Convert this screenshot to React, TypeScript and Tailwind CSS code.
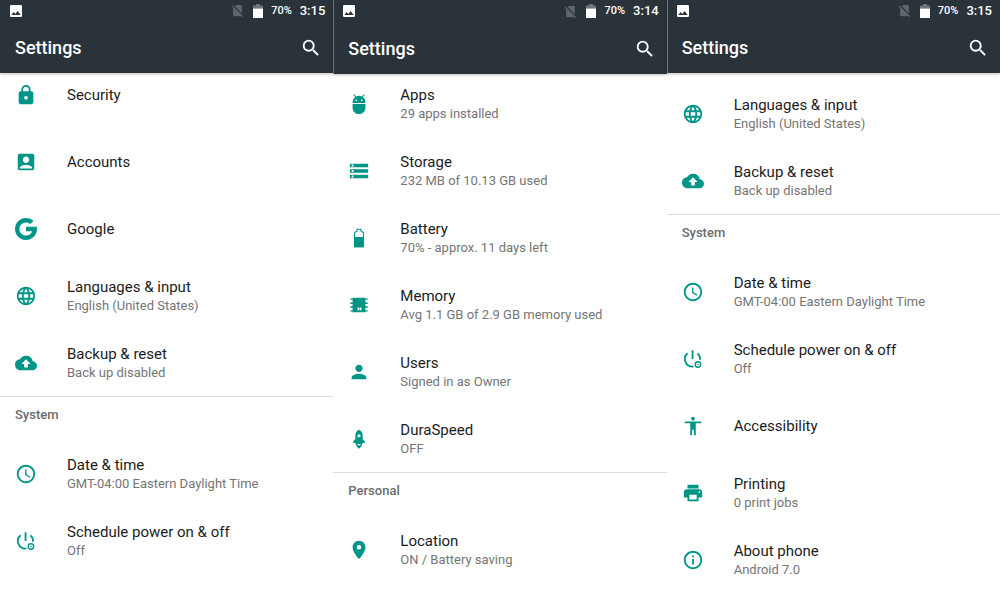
import React from "react";
import {
  MdAccessTime,
  MdAccessibility,
  MdAccountBox,
  MdAdb,
  MdCloudUpload,
  MdImage,
  MdInfoOutline,
  MdLanguage,
  MdLocationOn,
  MdLock,
  MdPerson,
  MdPrint,
  MdSearch,
  MdSignalCellularNoSim,
  MdStorage,
} from "react-icons/md";

type IconProps = { className?: string };

function GoogleIcon({ className }: IconProps) {
  return (
    <svg viewBox="4 4 40 40" fill="currentColor" className={className} aria-hidden="true">
      <path d="M43.611 20.083H42V20H24v8h11.303c-1.649 4.657-6.08 8-11.303 8-6.627 0-12-5.373-12-12s5.373-12 12-12c3.059 0 5.842 1.154 7.961 3.039l5.657-5.657C34.046 6.053 29.268 4 24 4 12.955 4 4 12.955 4 24s8.955 20 20 20 20-8.955 20-20c0-1.341-.138-2.65-.389-3.917z" />
    </svg>
  );
}

function BatteryIcon({ className }: IconProps) {
  return (
    <svg viewBox="0 0 24 24" fill="none" className={className} aria-hidden="true">
      <path d="M7.100 21.500V6l2.700-1.300V2.500h4.400v2.200L16.900 6v15.500z" stroke="currentColor" strokeWidth="1.200" strokeLinejoin="round" />
      <path d="M6.500 11h11v10.500a.6.6 0 0 1-.6.6H7.100a.6.6 0 0 1-.6-.6z" fill="currentColor" />
    </svg>
  );
}

function MemoryIcon({ className }: IconProps) {
  return (
    <svg viewBox="0 0 24 24" fill="currentColor" className={className} aria-hidden="true">
      <path
        fillRule="evenodd"
        d="M5 4h14v.8h2.500v1.600H19v2.800h2.500v1.600H19v2.600h2.500V15H19v2.600h2.500v1.600H19v.8H5v-.8H2.500v-1.600H5V15H2.500v-1.600H5v-2.600H2.500V9.200H5V6.400H2.500V4.800H5zM10.500 14.800v2.900h2v-2.900zm2.700 0v2.900h1.600v-2.900z"
      />
    </svg>
  );
}

function RocketIcon({ className }: IconProps) {
  return (
    <svg viewBox="0 0 24 24" fill="currentColor" className={className} aria-hidden="true">
      <path
        fillRule="evenodd"
        d="M12 2c2.700 1.300 4 3.500 4 6.300v4l2.200 1.900v2.100H16l-.5 1.200h-7L8 16.300H5.800v-2.100L8 12.300v-4C8 5.500 9.300 3.300 12 2zm0 4.800a1.700 1.700 0 1 0 0 3.400 1.700 1.700 0 0 0 0-3.400z"
      />
      <path d="M8.500 17.500h1.300c.4 1 1.200 1.500 2.200 1.500s1.800-.5 2.200-1.500h1.300c-.2 2-1.500 3.300-3.500 5-2-1.700-3.300-3-3.500-5z" />
    </svg>
  );
}

function PowerScheduleIcon({ className }: IconProps) {
  return (
    <svg viewBox="0 0 24 24" fill="none" stroke="currentColor" strokeWidth="2" className={className} aria-hidden="true">
      <path d="M11.500 2.500V12" />
      <path d="M6.100 5.800A8.200 8.200 0 0 0 12.500 20.200M16.900 5.800a8.200 8.200 0 0 1 2.700 7" />
      <circle cx="17.400" cy="18" r="3" strokeWidth="1.500" />
      <circle cx="17.400" cy="18" r=".9" fill="currentColor" stroke="none" />
    </svg>
  );
}

function StatusBattery({ className }: IconProps) {
  return (
    <svg viewBox="0 0 10 14" className={className} aria-hidden="true">
      <path d="M3 0h4v1.500h2.400a.6.6 0 0 1 .6.6V4.500H0V2.100a.6.6 0 0 1 .6-.6H3z" fill="#6f777c" />
      <path d="M0 4.500h10v8.900a.6.6 0 0 1-.6.6H.6a.6.6 0 0 1-.6-.6z" fill="#ffffff" />
    </svg>
  );
}

type Item = { title: string; summary?: string; icon: React.ComponentType<IconProps> };
type Group = { heading?: string; items: Item[] };
type Screen = { id: string; time: string; header: string; status: string; list: string; groups: Group[] };

const languages: Item = { title: "Languages & input", summary: "English (United States)", icon: MdLanguage };
const backup: Item = { title: "Backup & reset", summary: "Back up disabled", icon: MdCloudUpload };
const dateTime: Item = { title: "Date & time", summary: "GMT-04:00 Eastern Daylight Time", icon: MdAccessTime };
const power: Item = { title: "Schedule power on & off", summary: "Off", icon: PowerScheduleIcon };

const screens: Screen[] = [
  {
    id: "personal",
    time: "3:15",
    header: "pl-[15px]",
    status: "h-[21px]",
    list: "-mt-3",
    groups: [
      {
        items: [
          { title: "Security", icon: MdLock },
          { title: "Accounts", icon: MdAccountBox },
          { title: "Google", icon: GoogleIcon },
          languages,
          backup,
        ],
      },
      { heading: "System", items: [dateTime, power] },
    ],
  },
  {
    id: "device",
    time: "3:14",
    header: "border-l border-[#68757b] pl-[14px]",
    status: "h-[22px]",
    list: "-mt-1",
    groups: [
      {
        items: [
          { title: "Apps", summary: "29 apps installed", icon: MdAdb },
          { title: "Storage", summary: "232 MB of 10.13 GB used", icon: MdStorage },
          { title: "Battery", summary: "70% - approx. 11 days left", icon: BatteryIcon },
          { title: "Memory", summary: "Avg 1.1 GB of 2.9 GB memory used", icon: MemoryIcon },
          { title: "Users", summary: "Signed in as Owner", icon: MdPerson },
          { title: "DuraSpeed", summary: "OFF", icon: RocketIcon },
        ],
      },
      { heading: "Personal", items: [{ title: "Location", summary: "ON / Battery saving", icon: MdLocationOn }] },
    ],
  },
  {
    id: "system",
    time: "3:15",
    header: "border-l border-[#68757b] pl-[14px]",
    status: "h-[21px]",
    list: "mt-[7px]",
    groups: [
      { items: [languages, backup] },
      {
        heading: "System",
        items: [
          dateTime,
          power,
          { title: "Accessibility", icon: MdAccessibility },
          { title: "Printing", summary: "0 print jobs", icon: MdPrint },
          { title: "About phone", summary: "Android 7.0", icon: MdInfoOutline },
        ],
      },
    ],
  },
];

function Header({ screen }: { screen: Screen }) {
  return (
    <header className={`relative z-10 bg-[#2a3339] pr-2 text-white shadow-[0_1px_3px_rgba(0,0,0,0.25)] ${screen.header}`}>
      <div className={`flex items-center justify-between ${screen.status}`}>
        <MdImage className="-ml-[7px] size-4" />
        <div className="flex items-center">
          <MdSignalCellularNoSim className="mr-2 size-[15px] text-[#5d666b]" />
          <StatusBattery className="mr-2 h-3.5 w-2.5" />
          <span className="mr-2 text-[11px] leading-4 font-medium">70%</span>
          <span className="text-[13px] leading-4 font-medium">{screen.time}</span>
        </div>
      </div>
      <div className="flex h-[52px] items-center justify-between pt-0.5 pr-[3px]">
        <h1 className="text-lg leading-6 font-medium">Settings</h1>
        <button type="button" aria-label="Search settings">
          <MdSearch className="size-[22px]" />
        </button>
      </div>
    </header>
  );
}

function Row({ item }: { item: Item }) {
  const Icon = item.icon;
  return (
    <li>
      <button type="button" className="flex h-[67px] w-full items-center gap-[30px] pl-[15px] text-left">
        <Icon className="size-[22px] shrink-0 text-[#009587]" />
        <span className="flex flex-col">
          <span className="text-[15px] leading-5 text-[#1c1c1c]">{item.title}</span>
          {item.summary && <span className="text-[13px] leading-[18px] text-[#757575]">{item.summary}</span>}
        </span>
      </button>
    </li>
  );
}

function Phone({ screen }: { screen: Screen }) {
  return (
    <section aria-label={`Settings, ${screen.id}`} className="min-w-0">
      <Header screen={screen} />
      <div className={screen.list}>
        {screen.groups.map((group) => (
          <div key={group.heading ?? "top"}>
            {group.heading && (
              <h2 className="h-11 border-t border-[#dcdcdc] pt-2 pl-[15px] text-[13px] leading-5 font-medium text-[#6b6b6b]">
                {group.heading}
              </h2>
            )}
            <ul>
              {group.items.map((item) => (
                <Row key={item.title} item={item} />
              ))}
            </ul>
          </div>
        ))}
      </div>
    </section>
  );
}

export default function App() {
  return (
    <main className="grid min-h-screen grid-cols-3 overflow-hidden bg-white font-[Roboto,sans-serif]">
      {screens.map((screen) => (
        <Phone key={screen.id} screen={screen} />
      ))}
    </main>
  );
}
